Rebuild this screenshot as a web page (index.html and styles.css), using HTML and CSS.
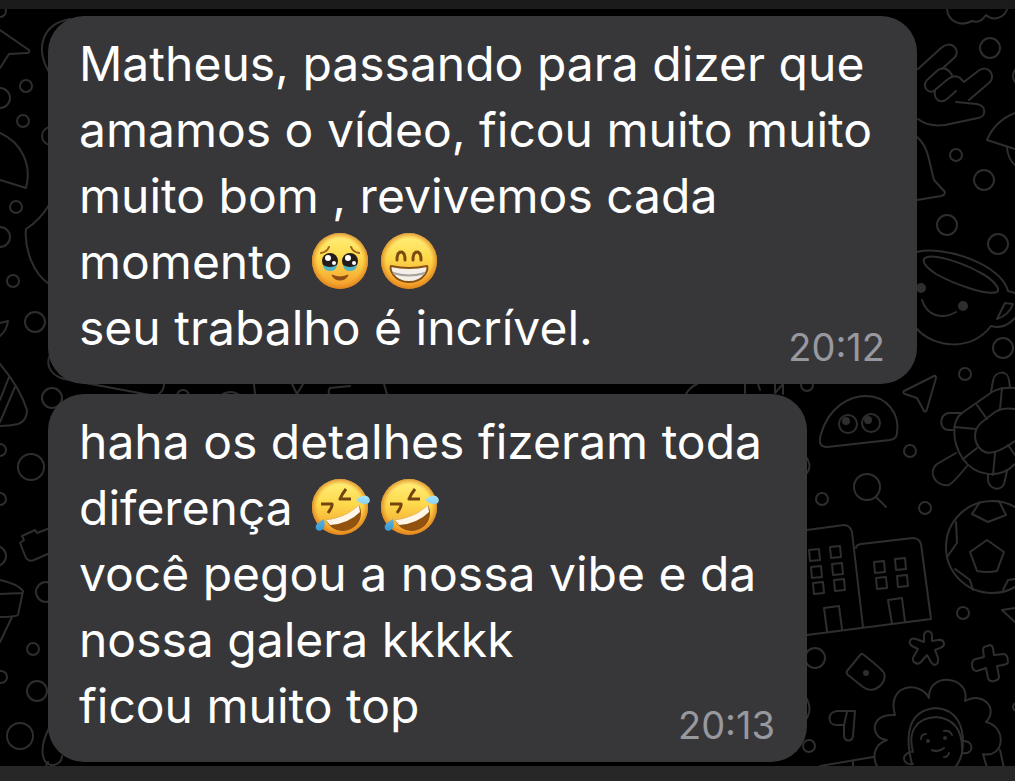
FILE: index.html
```
<!DOCTYPE html>
<html lang="pt-BR">
  <head>
    <meta charset="UTF-8" />
    <meta name="viewport" content="width=device-width, initial-scale=1.0" />
    <title>Conversa</title>
    <link rel="stylesheet" href="styles.css">
  </head>
  <body>
    <div class="top-bar"></div>

    <main class="chat">
      <svg class="wallpaper" viewBox="0 9 1015 757" preserveAspectRatio="xMidYMid slice" aria-hidden="true">
        <!-- left side -->
        <circle cx="0" cy="11" r="6" />
        <path d="M0 30L29 50Q30 53 27 53L9 54L0 68" />
        <path d="M70 19C42 24 35 48 49 72" />
        <circle cx="26" cy="86" r="6" />
        <circle cx="0" cy="98" r="10" />
        <circle cx="23" cy="121" r="6" />
        <circle cx="51" cy="136" r="9" />
        <path d="M0 133C22 143 32 165 26 188L0 180" />
        <circle cx="16" cy="207" r="6" />
        <circle cx="0" cy="237" r="10" />
        <path d="M49 205Q40 220 26 229C24 250 34 274 49 284" />
        <circle cx="13" cy="281" r="6" />
        <circle cx="35" cy="322" r="10" />
        <path d="M0 323L8 321Q7 330 0 336" />
        <path d="M0 364Q20 388 27 410Q27 421 18 424Q10 426 0 426M9 377L0 400M15 387L0 422" />
        <path d="M49 357C46 368 53 376 64 379L150 395" />
        <circle cx="52" cy="398" r="10" />
        <circle cx="0" cy="450" r="6" />
        <circle cx="31" cy="467" r="13" />
        <circle cx="0" cy="499" r="6" />
        <path d="M50 528L37 533L35 530L22 536L24 540L20 543L26 558Q29 562 34 560L50 553" />
        <circle cx="-4" cy="556" r="10" />
        <path d="M0 580Q18 584 23 591L18 615Q15 617 0 617M0 594L22 593M12 617L0 642" />
        <circle cx="46" cy="592" r="10" />
        <circle cx="33" cy="649" r="6" />
        <circle cx="1" cy="677" r="6" />
        <circle cx="37" cy="691" r="10" />
        <circle cx="20" cy="736" r="13" />
        <path d="M49 728C38 750 42 766 54 765Q62 763 62 756M48 762L45 768" />

        <!-- strip between the messages -->
        <path d="M164 384Q164 390 159 394M254 384L255 394M292 384L297 394L303 384M350 386L330 388Q328 390 329 394M384 384L387 394" />
        <circle cx="183" cy="396" r="6" />
        <path d="M223 394Q231 390 238 394M686 394Q690 387 697 384M745 384V393M758 384L760 390M775 384V393L783 384V394" />
        <circle cx="807" cy="385" r="6" />

        <!-- cloud, hand, mushroom, bell -->
        <path d="M947 9C948 22 961 27 972 21Q980 24 986 15C994 22 1005 17 1007 9" />
        <circle cx="990" cy="48" r="10" />
        <circle cx="1023" cy="76" r="10" />
        <path d="M918 69L941 48C951 39 961 50 955 57L942 69M927 80L938 70Q946 65 952 75M927 80C921 88 930 95 935 90L948 79Q955 74 960 78L964 82M935 90C933 100 941 104 947 99L956 91M964 82L978 71C988 64 996 75 990 82L969 100M956 102L977 104C987 106 986 117 978 118L945 125Q928 127 918 119" />
        <path d="M1015 113Q995 121 987 140L1015 149M1007 148Q1008 159 1015 165" />
        <circle cx="956" cy="155" r="6" />
        <circle cx="984" cy="180" r="10" />
        <path d="M917 137C929 147 929 163 934 180L945 192Q945 195 941 196L917 200" />

        <!-- smiling cup -->
        <circle cx="947" cy="225" r="10" />
        <circle cx="998" cy="244" r="10" />
        <path d="M917 252C945 245 1002 265 1008 291L1015 293" />
        <path d="M924 259C930 252 961 262 979 272C993 279 1001 289 997 292C987 296 954 284 936 274C927 268 922 263 924 259Z" />
        <circle class="fill" cx="921" cy="288" r="4" />
        <circle class="fill" cx="963" cy="306" r="4" />
        <path d="M922 300C927 316 942 320 956 312M917 329C934 348 971 352 991 326Q1004 330 1015 318M1005 303L1013 304Q1009 315 997 319Z" />
        <circle cx="1003" cy="348" r="10" />
        <path d="M934 376L904 391Q902 393 905 394L917 398L924 411Q926 413 927 409L936 378Q936 375 934 376Z" />
        <circle cx="965" cy="374" r="6" />

        <!-- gumdrop with eyes -->
        <path d="M827 447Q817 447 821 434C829 407 849 396 866 396C887 396 900 414 897 433Q897 439 890 440Z" />
        <circle cx="848" cy="424" r="9" />
        <circle cx="871" cy="423" r="9" />
        <circle class="fill" cx="846" cy="421" r="3" />
        <circle class="fill" cx="868" cy="420" r="3" />
        <circle cx="910" cy="451" r="6" />
        <circle cx="867" cy="487" r="13" />
        <path d="M876 497L886 507" />
        <circle cx="822" cy="499" r="6" />
        <circle cx="925" cy="508" r="6" />
        <path d="M807 458Q812 467 807 473" />

        <!-- turtle -->
        <path d="M1015 388Q1001 387 992 392L962 413C952 420 951 441 963 459C975 476 999 480 1015 464" />
        <path d="M1015 409Q1003 407 995 412L982 422C971 431 974 447 985 452Q994 456 1015 441" />
        <path d="M1002 388L1000 409M977 405L987 419M954 427L976 429M963 459L977 448M993 475L995 453M1008 445L1015 455" />
        <path d="M991 392L993 381C995 370 1008 370 1009 380L1010 388M962 413L948 413C939 416 939 428 948 430H953M956 453L937 464C927 473 936 487 949 485Q955 481 967 466M988 475C986 490 1001 492 1004 484L1007 471" />

        <!-- buildings -->
        <path d="M807 530L844 525Q850 525 852 532L863 627M856 548Q856 545 861 544L913 538Q919 538 921 544L931 619L807 635" />
        <path d="M809 550L819 549L820 560L810 561ZM830 547L840 546L841 557L831 558ZM811 567L821 566L822 577L812 578ZM832 564L842 563L843 574L833 575ZM813 583L823 582L824 593L814 594ZM834 580L844 579L845 590L835 591ZM874 562L884 561L885 572L875 573ZM895 559L905 558L906 569L896 570ZM876 578L886 577L887 588L877 589ZM897 576L907 575L908 586L898 587ZM827 631L824 608L839 606L842 629M892 624L888 600L902 598L905 622" />

        <!-- ball -->
        <circle cx="992" cy="547" r="46" />
        <path d="M987 540L1004 552L997 571Q987 573 977 571L970 552ZM980 502L972 514L988 522L1006 515L999 501M956 522L957 543L947 557M955 569L970 580L973 590M1003 590L1008 580L1015 579" />
        <circle cx="963" cy="613" r="6" />
        <path d="M1015 608L1002 610L1015 622" />

        <!-- tag, star, plus -->
        <circle cx="815" cy="658" r="10" />
        <path d="M861 654L847 671Q846 673 848 675L863 687C875 696 888 681 884 673Q883 670 864 655Q862 653 861 654Z" />
        <circle class="fill" cx="866" cy="673" r="2" />
        <path d="M924 642L924 635C925 630 931 630 932 635L932 641L938 640C945 639 946 646 940 648L935 650L938 658C939 665 934 667 931 662L927 655L921 662C917 666 910 661 914 656L918 649L912 646C907 642 911 637 916 639Z" />
        <path d="M984 657L983 650Q983 646 988 646L989 645Q993 645 993 649L994 655L1004 654Q1008 655 1008 662Q1008 664 1003 665L997 666L999 677Q999 680 994 681Q989 682 988 678L986 668L977 671Q972 671 972 664Q972 660 976 659Z" />
        <circle cx="1017" cy="707" r="4" />

        <!-- pilcrow -->
        <path d="M854 711H837C827 712 827 725 837 725H844V736C845 742 852 742 853 736L855 711M847 712L844 725" />
        <path d="M807 699Q812 709 807 718" />
        <circle cx="809" cy="746" r="6" />

        <!-- curly head -->
        <path d="M879 769C872 760 872 745 887 740C870 739 869 713 895 715C886 684 920 680 929 698C928 671 971 676 965 701C983 691 999 709 986 722C1008 727 1004 759 983 754L987 768M1000 750L1004 768M820 766L873 757M853 760V768" />
        <path d="M912 764C904 733 909 711 935 708C957 709 966 727 962 753Q960 762 955 767M913 752C908 734 914 718 936 717C958 719 963 735 962 753M911 752C900 754 903 766 913 764M963 741C974 740 975 755 962 753" />
        <path d="M921 739Q921 734 926 734M944 731Q950 730 952 735M932 750Q938 753 944 748M944 757Q948 757 949 753" />
        <circle class="fill" cx="928" cy="741" r="1" />
        <circle class="fill" cx="945" cy="738" r="1" />
      </svg>

      <!-- emoji shapes, used in the messages below -->
      <svg class="defs" aria-hidden="true">
        <defs>
          <linearGradient id="skin" x1="0" y1="0" x2="0" y2="1">
            <stop offset="0" stop-color="#fff07c" />
            <stop offset="0.45" stop-color="#fdd94c" />
            <stop offset="1" stop-color="#f39a27" />
          </linearGradient>
          <radialGradient id="edge">
            <stop offset="0.8" stop-color="#e58a20" stop-opacity="0" />
            <stop offset="1" stop-color="#d87a1c" stop-opacity="0.75" />
          </radialGradient>
          <linearGradient id="tear" x1="0" y1="0" x2="0" y2="1">
            <stop offset="0" stop-color="#a5e4fa" />
            <stop offset="1" stop-color="#3999d0" />
          </linearGradient>
          <symbol id="face" viewBox="0 0 60 60">
            <circle cx="30" cy="30" r="28" fill="url(#skin)" />
            <circle cx="30" cy="30" r="28" fill="url(#edge)" />
          </symbol>
          <symbol id="touched" viewBox="0 0 60 60">
            <use href="#face" width="60" height="60" />
            <g fill="#241c1a">
              <circle cx="20" cy="30" r="8" />
              <circle cx="40" cy="30" r="8" />
            </g>
            <path d="M13 34Q20 38 27 34Q26 40 20 40T13 34ZM33 34Q40 38 47 34Q46 40 40 40T33 34Z" fill="#4fb3c4" />
            <g fill="#fff">
              <circle cx="18" cy="27" r="3" />
              <circle cx="38" cy="27" r="3" />
              <circle cx="24" cy="32" r="2" />
              <circle cx="44" cy="32" r="2" />
            </g>
            <path d="M11 22Q17 21 19 16M41 16Q43 21 49 22" fill="none" stroke="#a0611b" stroke-width="2" stroke-linecap="round" />
            <path d="M22 44Q30 48 38 44Q36 49 30 49T22 44Z" fill="#8b4d13" stroke="#8b4d13" stroke-linejoin="round" />
          </symbol>
          <symbol id="beaming" viewBox="0 0 60 60">
            <use href="#face" width="60" height="60" />
            <path d="M18 29Q18 21 22 21T26 29M34 29Q34 21 38 21T42 29" fill="none" stroke="#7d4b12" stroke-width="3" stroke-linecap="round" />
            <path d="M12 35Q30 39 48 35C50 37 46 51 30 51C14 51 10 37 12 35Z" fill="#f4efe9" stroke="#875113" stroke-width="2" />
            <path d="M14 42Q30 47 46 42" fill="none" stroke="#aaa39d" stroke-width="2" />
          </symbol>
          <symbol id="rofl" viewBox="0 0 60 60">
            <use href="#face" width="60" height="60" />
            <path d="M11 27L22 27Q23 29 18 36M36 12Q32 17 30 22L41 22" fill="none" stroke="#74440f" stroke-width="3" stroke-linejoin="round" />
            <path d="M16 43Q36 41 49 28C55 40 47 53 34 54Q22 55 16 43Z" fill="#91520f" />
            <path d="M16 43Q36 41 49 28L50 35Q38 47 20 48Z" fill="#fff6e8" />
            <path d="M46 23Q51 18 57 19C62 22 60 28 54 27Q49 26 46 23ZM14 42Q16 50 12 53C7 56 3 50 8 46Z" fill="url(#tear)" />
          </symbol>
        </defs>
      </svg>

      <article class="message">
        <p class="text">
          Matheus, passando para dizer que amamos o vídeo, ficou muito muito muito bom , revivemos cada momento
          <svg class="emoji" role="img" aria-label="🥹"><use href="#touched" /></svg><svg class="emoji" role="img" aria-label="😁"><use href="#beaming" /></svg><br>
          seu trabalho é incrível.
        </p>
        <time class="time">20:12</time>
      </article>

      <article class="message short">
        <p class="text">
          haha os detalhes fizeram toda diferença
          <svg class="emoji" role="img" aria-label="🤣"><use href="#rofl" /></svg><svg class="emoji" role="img" aria-label="🤣"><use href="#rofl" /></svg><br>
          você pegou a nossa vibe e da<br>
          nossa galera kkkkk<br>
          ficou muito top
        </p>
        <time class="time">20:13</time>
      </article>
    </main>

    <div class="bottom-bar"></div>
  </body>
</html>
```

FILE: styles.css
```
* {
  box-sizing: border-box;
}

body {
  margin: 0;
  min-height: 100vh;
  display: flex;
  flex-direction: column;
  background: #000;
  color: #fff;
  font-family: Inter, "Liberation Sans", sans-serif;
}

.top-bar {
  height: 9px;
  background: #1b1b1b;
}

.bottom-bar {
  height: 15px;
  background: #272727;
}

.chat {
  position: relative;
  flex: 1;
  display: flex;
  flex-direction: column;
  align-items: flex-start;
  gap: 10px;
  padding: 7px 48px 4px;
  overflow: hidden;
}

.wallpaper {
  position: absolute;
  top: 0;
  left: 0;
  width: 100%;
  height: 100%;
  fill: none;
  stroke: #2e2e2e;
  stroke-width: 2;
  stroke-linecap: round;
  stroke-linejoin: round;
}

.wallpaper .fill {
  fill: #2e2e2e;
}

.defs {
  position: absolute;
  width: 0;
  height: 0;
}

/* text and time share one cell, the time sits in the corner */
.message {
  position: relative;
  display: grid;
  max-width: 869px;
  padding: 15px 32px 23px 31px;
  border-radius: 36px;
  background: #373739;
}

.short {
  max-width: 759px;
}

.text,
.time {
  grid-area: 1 / 1;
}

.text {
  margin: 0;
  font-size: 48px;
  line-height: 66px;
}

.time {
  align-self: end;
  justify-self: end;
  color: #98989f;
  font-size: 38px;
  line-height: 28px;
}

.emoji {
  width: 60px;
  height: 60px;
  margin: -8px 9px -8px 4px;
  vertical-align: -4px;
}

.emoji + .emoji {
  margin-left: 0;
}

@media screen and (max-width: 700px) {
  .chat {
    padding: 8px 16px;
  }

  .text {
    font-size: 24px;
    line-height: 34px;
  }

  .time {
    font-size: 18px;
    line-height: 20px;
  }

  .emoji {
    width: 32px;
    height: 32px;
  }
}
```
